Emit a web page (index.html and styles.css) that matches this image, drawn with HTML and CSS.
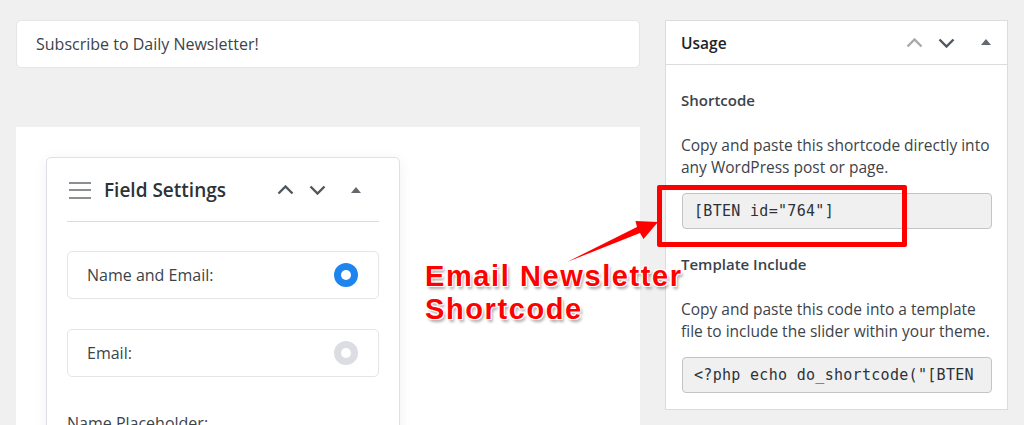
FILE: index.html
```html
<!DOCTYPE html>
<html lang="en">

<head>
    <meta charset="UTF-8">
    <meta name="viewport" content="width=device-width, initial-scale=1.0">
    <title>Newsletter</title>
    <link rel="stylesheet" href="styles.css">
</head>

<body>
    <div class="stage">
        <div class="main">
            <div class="title-box">Subscribe to Daily Newsletter!</div>

            <div class="builder">
                <div class="field-card">
                    <div class="field-head">
                        <span class="burger"><i></i><i></i><i></i></span>
                        <span class="field-title">Field Settings</span>
                        <span class="field-tools">
                            <svg class="chev" width="17" height="10" viewBox="0 0 17 10"><polyline points="1.5,8.5 8.5,1.5 15.5,8.5" /></svg>
                            <svg class="chev" width="17" height="10" viewBox="0 0 17 10"><polyline points="1.5,1.5 8.5,8.5 15.5,1.5" /></svg>
                            <svg class="tri" width="10" height="7" viewBox="0 0 10 7"><polygon points="5,0 10,6 0,6" /></svg>
                        </span>
                    </div>

                    <div class="option">
                        <span>Name and Email:</span>
                        <span class="radio on"></span>
                    </div>
                    <div class="option">
                        <span>Email:</span>
                        <span class="radio"></span>
                    </div>

                    <div class="field-label">Name Placeholder:</div>
                </div>
            </div>
        </div>

        <div class="side">
            <div class="side-head">
                <span class="side-title">Usage</span>
                <span class="side-tools">
                    <svg class="chev off" width="17" height="10" viewBox="0 0 17 10"><polyline points="1.5,8.5 8.5,1.5 15.5,8.5" /></svg>
                    <svg class="chev" width="17" height="10" viewBox="0 0 17 10"><polyline points="1.5,1.5 8.5,8.5 15.5,1.5" /></svg>
                    <svg class="tri" width="10" height="7" viewBox="0 0 10 7"><polygon points="5,0 10,6 0,6" /></svg>
                </span>
            </div>
            <div class="side-body">
                <h3>Shortcode</h3>
                <p>Copy and paste this shortcode directly into any WordPress post or page.</p>
                <div class="code"><span>[BTEN id="764"]</span></div>

                <h3>Template Include</h3>
                <p>Copy and paste this code into a template file to include the slider within your theme.</p>
                <div class="code"><span>&lt;?php echo do_shortcode("[BTEN id="764"]"); ?&gt;</span></div>
            </div>
        </div>

        <!-- annotation on top of the screenshot -->
        <div class="mark-box"></div>
        <svg class="mark-arrow" width="1024" height="425" viewBox="0 0 1024 425">
            <polygon points="567,262 637,227 635.5,221 658,222 643.5,239 640,233" />
        </svg>
        <div class="mark-text">Email Newsletter<br />Shortcode</div>
    </div>
</body>

</html>
```

FILE: styles.css
```css
body {
    margin: 0;
    padding: 0;
    background-color: #f0f0f1;
    font-family: 'Open Sans', 'Noto Sans', sans-serif;
    color: #3c434a;
    height: 425px;
    overflow: hidden;
}

.stage {
    position: relative;
    display: flex;
    gap: 25px;
    padding: 20px 16px 0 16px;
    align-items: flex-start;
}

.main {
    width: 624px;
}

.title-box {
    height: 46px;
    display: flex;
    align-items: center;
    padding-left: 19px;
    background-color: white;
    border: 1px solid #e4e5e9;
    border-radius: 5px;
    font-size: 16px;
    color: #3c434a;
}

.builder {
    margin-top: 59px;
    height: 320px;
    background-color: white;
    padding: 30px 0 0 30px;
}

.field-card {
    width: 312px;
    height: 300px;
    padding: 20px;
    border: 1px solid #dfe0e6;
    border-radius: 5px;
    box-shadow: 0 2px 14px rgba(40, 40, 80, 0.06);
}

.field-head {
    display: flex;
    align-items: center;
    height: 24px;
    padding-bottom: 19px;
    border-bottom: 1px solid #dcdde2;
}

.burger {
    display: flex;
    flex-direction: column;
    gap: 5.5px;
    width: 22px;
    margin: 0 14px 0 2px;
}

.burger i {
    display: block;
    height: 2px;
    background-color: #8c8f94;
}

.field-title {
    font-size: 19px;
    font-weight: 600;
    color: #2c3338;
    flex: 1;
    margin-left: -1px;
}

.field-tools {
    display: flex;
    align-items: center;
    margin-right: 18px;
}

.field-tools .chev {
    margin-left: 15px;
}

.field-tools .tri {
    margin-left: 25px;
}

.chev polyline {
    fill: none;
    stroke: #50575e;
    stroke-width: 2.4;
}

.chev.off polyline {
    stroke: #a7aaad;
}

.tri polygon {
    fill: #646970;
}

.option {
    display: flex;
    align-items: center;
    justify-content: space-between;
    height: 46px;
    margin-top: 29px;
    padding: 0 20px 0 19px;
    border: 1px solid #e4e5e9;
    border-radius: 5px;
    font-size: 16px;
}

.option + .option {
    margin-top: 30px;
}

.radio {
    width: 24px;
    height: 24px;
    border-radius: 50%;
    background-color: #dcdde3;
    display: flex;
    align-items: center;
    justify-content: center;
}

.radio::after {
    content: "";
    width: 10px;
    height: 10px;
    border-radius: 50%;
    background-color: white;
}

.radio.on {
    background-color: #1e85ee;
}

.field-label {
    margin-top: 35px;
    font-size: 16px;
}

.side {
    width: 341px;
    background-color: white;
    border: 1px solid #dcdcde;
}

.side-head {
    display: flex;
    align-items: center;
    height: 43px;
    padding: 0 15px;
    border-bottom: 1px solid #dcdcde;
}

.side-title {
    flex: 1;
    font-size: 15.5px;
    font-weight: 600;
    color: #1d2327;
}

.side-tools {
    display: flex;
    align-items: center;
    margin-right: 1px;
}

.side-tools .chev {
    margin-left: 15px;
}

.side-tools .tri {
    margin-left: 26px;
}

.side-body {
    padding: 0 15px 16px 15px;
    font-size: 15.5px;
}

.side-body h3 {
    margin: 25px 0 0 0;
    font-size: 15px;
    font-weight: 600;
    line-height: 20px;
    color: #3c434a;
}

.side-body p {
    margin: 24px 0 0 0;
    line-height: 22px;
}

.code {
    margin-top: 15px;
    height: 34px;
    width: 284px;
    margin-left: 1px;
    padding: 0 13px 0 11px;
    display: flex;
    align-items: center;
    background-color: #f0f0f1;
    border: 1px solid #c3c4c7;
    border-radius: 4px;
    font-family: 'DejaVu Sans Mono', monospace;
    font-size: 15px;
    letter-spacing: 0.3px;
    color: #2c3338;
}

.code span {
    flex: 1;
    overflow: hidden;
    white-space: nowrap;
}

.mark-box {
    position: absolute;
    left: 657px;
    top: 185px;
    width: 240px;
    height: 52px;
    border: 5px solid #ff0000;
    border-radius: 2px;
}

.mark-arrow {
    position: absolute;
    left: 0;
    top: 0;
}

.mark-arrow polygon {
    fill: #ff0000;
}

.mark-text {
    position: absolute;
    left: 425px;
    top: 260px;
    font-family: 'Liberation Sans', Arial, sans-serif;
    font-weight: bold;
    font-size: 29px;
    line-height: 33px;
    letter-spacing: 1.6px;
    color: #ff0000;
    text-shadow: -1px -1px 0 white, 1px -1px 0 white, -1px 1px 0 white, 1px 1px 0 white, 2px 3px 3px rgba(0, 0, 0, 0.35);
}
```
